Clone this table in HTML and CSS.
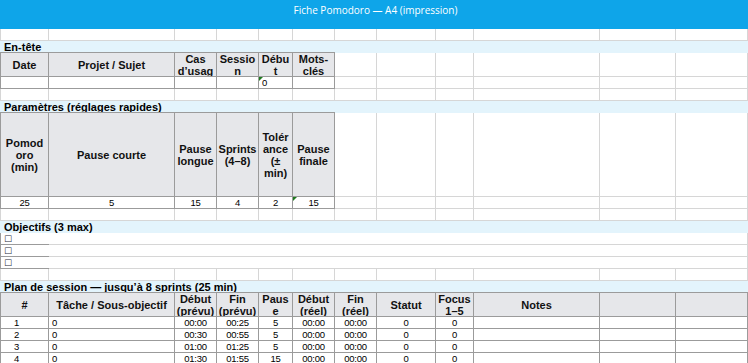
FILE: index.html
```html
<!DOCTYPE html>
<html lang="fr">
<head>
<meta charset="utf-8">
<title>Fiche Pomodoro</title>
<link rel="stylesheet" href="styles.css">
</head>
<body>
<div class="sheet">
  <div class="title">Fiche Pomodoro — A4 (impression)</div>

  <div class="row"><div class="c"></div><div class="c"></div><div class="c"></div><div class="c"></div><div class="c"></div><div class="c"></div><div class="c"></div><div class="c"></div><div class="c"></div><div class="c"></div><div class="c"></div><div class="c"></div></div>

  <div class="section">En-tête</div>

  <div class="row h24">
    <div class="c t th">Date</div>
    <div class="c t th">Projet / Sujet</div>
    <div class="c t th">Cas<br>d’usag</div>
    <div class="c t th">Sessio<br>n</div>
    <div class="c t th">Débu<br>t</div>
    <div class="c t th">Mots-<br>clés</div>
    <div class="c"></div><div class="c"></div><div class="c"></div><div class="c"></div><div class="c"></div><div class="c"></div>
  </div>
  <div class="row">
    <div class="c t td"></div>
    <div class="c t td"></div>
    <div class="c t td"></div>
    <div class="c t td"></div>
    <div class="c t td left flag">0</div>
    <div class="c t td"></div>
    <div class="c"></div><div class="c"></div><div class="c"></div><div class="c"></div><div class="c"></div><div class="c"></div>
  </div>

  <div class="row"><div class="c"></div><div class="c"></div><div class="c"></div><div class="c"></div><div class="c"></div><div class="c"></div><div class="c"></div><div class="c"></div><div class="c"></div><div class="c"></div><div class="c"></div><div class="c"></div></div>

  <div class="section">Paramètres (réglages rapides)</div>

  <div class="row h84">
    <div class="c t th">Pomod<br>oro<br>(min)</div>
    <div class="c t th">Pause courte</div>
    <div class="c t th">Pause<br>longue</div>
    <div class="c t th">Sprints<br>(4–8)</div>
    <div class="c t th">Tolér<br>ance<br>(±<br>min)</div>
    <div class="c t th">Pause<br>finale</div>
    <div class="c"></div><div class="c"></div><div class="c"></div><div class="c"></div><div class="c"></div><div class="c"></div>
  </div>
  <div class="row">
    <div class="c t td">25</div>
    <div class="c t td">5</div>
    <div class="c t td">15</div>
    <div class="c t td">4</div>
    <div class="c t td">2</div>
    <div class="c t td flag">15</div>
    <div class="c"></div><div class="c"></div><div class="c"></div><div class="c"></div><div class="c"></div><div class="c"></div>
  </div>

  <div class="row"><div class="c"></div><div class="c"></div><div class="c"></div><div class="c"></div><div class="c"></div><div class="c"></div><div class="c"></div><div class="c"></div><div class="c"></div><div class="c"></div><div class="c"></div><div class="c"></div></div>

  <div class="section">Objectifs (3 max)</div>

  <div class="row obj"><div class="c ob-a"><span class="box">☐</span></div><div class="c ob-rest"></div></div>
  <div class="row obj"><div class="c ob-a"><span class="box">☐</span></div><div class="c ob-rest"></div></div>
  <div class="row obj"><div class="c ob-a"><span class="box">☐</span></div><div class="c ob-rest"></div></div>

  <div class="row"><div class="c"></div><div class="c"></div><div class="c"></div><div class="c"></div><div class="c"></div><div class="c"></div><div class="c"></div><div class="c"></div><div class="c"></div><div class="c"></div><div class="c"></div><div class="c"></div></div>

  <div class="section">Plan de session — jusqu’à 8 sprints (25 min)</div>

  <div class="row h24">
    <div class="c t th">#</div>
    <div class="c t th">Tâche / Sous-objectif</div>
    <div class="c t th">Début<br>(prévu)</div>
    <div class="c t th">Fin<br>(prévu)</div>
    <div class="c t th">Paus<br>e</div>
    <div class="c t th">Début<br>(réel)</div>
    <div class="c t th">Fin<br>(réel)</div>
    <div class="c t th">Statut</div>
    <div class="c t th">Focus<br>1–5</div>
    <div class="c t th">Notes</div>
    <div class="c t th"></div>
    <div class="c t th"></div>
  </div>
  <div class="row">
    <div class="c t td num">1</div><div class="c t td left">0</div><div class="c t td">00:00</div><div class="c t td">00:25</div><div class="c t td">5</div><div class="c t td">00:00</div><div class="c t td">00:00</div><div class="c t td">0</div><div class="c t td">0</div><div class="c t td"></div><div class="c t td"></div><div class="c t td"></div>
  </div>
  <div class="row">
    <div class="c t td num">2</div><div class="c t td left">0</div><div class="c t td">00:30</div><div class="c t td">00:55</div><div class="c t td">5</div><div class="c t td">00:00</div><div class="c t td">00:00</div><div class="c t td">0</div><div class="c t td">0</div><div class="c t td"></div><div class="c t td"></div><div class="c t td"></div>
  </div>
  <div class="row">
    <div class="c t td num">3</div><div class="c t td left">0</div><div class="c t td">01:00</div><div class="c t td">01:25</div><div class="c t td">5</div><div class="c t td">00:00</div><div class="c t td">00:00</div><div class="c t td">0</div><div class="c t td">0</div><div class="c t td"></div><div class="c t td"></div><div class="c t td"></div>
  </div>
  <div class="row">
    <div class="c t td num">4</div><div class="c t td left">0</div><div class="c t td">01:30</div><div class="c t td">01:55</div><div class="c t td">15</div><div class="c t td">00:00</div><div class="c t td">00:00</div><div class="c t td">0</div><div class="c t td">0</div><div class="c t td"></div><div class="c t td"></div><div class="c t td"></div>
  </div>
</div>
</body>
</html>
```

FILE: styles.css
```css
html, body {
  margin: 0;
  padding: 0;
  background: #ffffff;
}

.sheet {
  width: 748px;
  height: 363px;
  overflow: hidden;
  font-family: "Liberation Sans", Arial, sans-serif;
  color: #000;
}

.title {
  box-sizing: border-box;
  height: 29px;
  padding-top: 3px;
  padding-left: 3px;
  background: #0ea5e9;
  color: #ffffff;
  font-family: "Open Sans", "Noto Sans", sans-serif;
  font-size: 10px;
  line-height: 14px;
  text-align: center;
}

.row {
  display: grid;
  grid-template-columns: 49px 126px 42px 42px 34px 42px 42px 59px 38px 126px 76px 72px;
  height: 12px;
}

.row.h24 { height: 24px; }
.row.h84 { height: 84px; }

.c {
  box-sizing: border-box;
  min-width: 0;
  overflow: hidden;
  position: relative;
  border-right: 1px solid #d6d6d6;
  border-bottom: 1px solid #d6d6d6;
}

.c:first-child {
  border-left: 1px solid #d6d6d6;
}

.t {
  border-right-color: #9b9b9b;
  border-bottom-color: #9b9b9b;
}

.t:first-child {
  border-left-color: #9b9b9b;
}

.th {
  background: #e6e7ea;
  font-weight: 700;
  font-size: 11px;
  line-height: 12px;
  display: flex;
  align-items: center;
  justify-content: center;
  text-align: center;
  box-shadow: 0 -1px 0 #9b9b9b;
  color: #111;
}

.td {
  font-family: "Liberation Sans", Arial, sans-serif;
  font-size: 9.5px;
  letter-spacing: -0.3px;
  line-height: 11px;
  text-align: center;
  white-space: nowrap;
}

.td.left {
  text-align: left;
  padding-left: 3px;
}

.td.num {
  text-align: left;
  padding-left: 13px;
}

.flag::before {
  content: "";
  position: absolute;
  top: 0;
  left: 0;
  border-top: 4px solid #1f7a1f;
  border-right: 4px solid transparent;
}

.section {
  height: 12px;
  background: #e3f4fc;
  font-weight: 700;
  font-size: 11px;
  line-height: 12px;
  padding-left: 4px;
  white-space: nowrap;
}

.obj .ob-a {
  border-right: none;
  border-left-color: #9b9b9b;
  border-bottom-color: #9b9b9b;
  padding-left: 3px;
  overflow: visible;
  display: flex;
  align-items: center;
}

.obj .ob-rest {
  grid-column: 2 / -1;
}

.box {
  font-family: "DejaVu Sans", sans-serif;
  font-size: 9px;
  font-weight: 700;
  line-height: 10px;
  color: #1f2d3d;
}
```
